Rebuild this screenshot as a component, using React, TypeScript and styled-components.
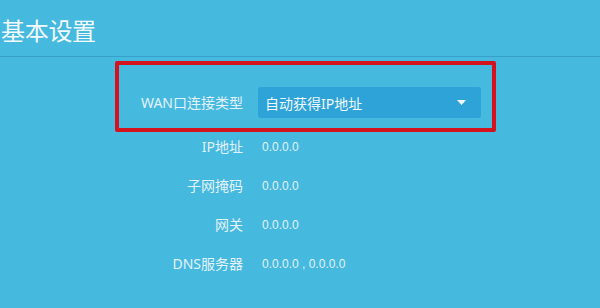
import React from 'react';
import styled, { createGlobalStyle } from 'styled-components';

const GlobalStyle = createGlobalStyle`
  html, body {
    margin: 0;
    padding: 0;
    background: #46b9df;
  }
  body {
    font-family: "Noto Sans", "Noto Sans CJK SC", sans-serif;
    color: #e6f4fa;
    min-height: 100vh;
    overflow: hidden;
  }
`;

const Page = styled.div`
  width: 600px;
  height: 308px;
  background: #46b9df;
`;

const Header = styled.div`
  height: 57px;
  border-bottom: 1px solid #389ecb;
  box-sizing: border-box;
  padding: 14px 0 0 1px;
`;

const Title = styled.h1`
  margin: 0;
  font-family: "Noto Sans CJK SC", sans-serif;
  font-size: 24px;
  font-weight: 400;
  line-height: 32px;
  letter-spacing: -0.3px;
  color: #f2fafd;
`;

const Form = styled.div`
  margin: 4px 0 0 115px;
  width: 381px;
`;

const Highlight = styled.div`
  border: 4px solid #d3141e;
  border-radius: 2px;
  padding: 22px 11px 10px 0;
`;

const Row = styled.div<{ $tall?: boolean }>`
  display: grid;
  grid-template-columns: 124px 1fr;
  column-gap: 15px;
  align-items: center;
  height: ${(p) => (p.$tall ? '31px' : '20px')};
`;

const Label = styled.div`
  text-align: right;
  font-size: 14px;
  line-height: 20px;
  white-space: nowrap;
  color: #e2f2f9;
`;

const Value = styled.div`
  padding-left: 4px;
  font-family: "Liberation Sans", "Noto Sans CJK SC", sans-serif;
  font-size: 12px;
  line-height: 20px;
  color: #e2f2f9;
`;

const Select = styled.div`
  height: 31px;
  background: #2ea3d7;
  border-radius: 3px;
  display: flex;
  align-items: center;
  justify-content: space-between;
  padding: 0 15px 0 7px;
  font-size: 14px;
  color: #eef8fc;
`;

const Caret = styled.svg`
  width: 9px;
  height: 5px;
  display: block;
`;

const Fields = styled.div`
  display: flex;
  flex-direction: column;
  gap: 19px;
  margin-top: 5px;
  padding-left: 4px;
`;

const fields = [
  { label: 'IP地址', value: '0.0.0.0' },
  { label: '子网掩码', value: '0.0.0.0' },
  { label: '网关', value: '0.0.0.0' },
  { label: 'DNS服务器', value: '0.0.0.0 , 0.0.0.0' },
];

export default function App() {
  return (
    <Page>
      <GlobalStyle />
      <Header>
        <Title>基本设置</Title>
      </Header>
      <Form>
        <Highlight>
          <Row $tall>
            <Label>WAN口连接类型</Label>
            <Select>
              <span>自动获得IP地址</span>
              <Caret viewBox="0 0 9 5">
                <path d="M0 0 L9 0 L4.5 5 Z" fill="#f4fbfe" />
              </Caret>
            </Select>
          </Row>
        </Highlight>
        <Fields>
          {fields.map((f) => (
            <Row key={f.label}>
              <Label>{f.label}</Label>
              <Value>{f.value}</Value>
            </Row>
          ))}
        </Fields>
      </Form>
    </Page>
  );
}
